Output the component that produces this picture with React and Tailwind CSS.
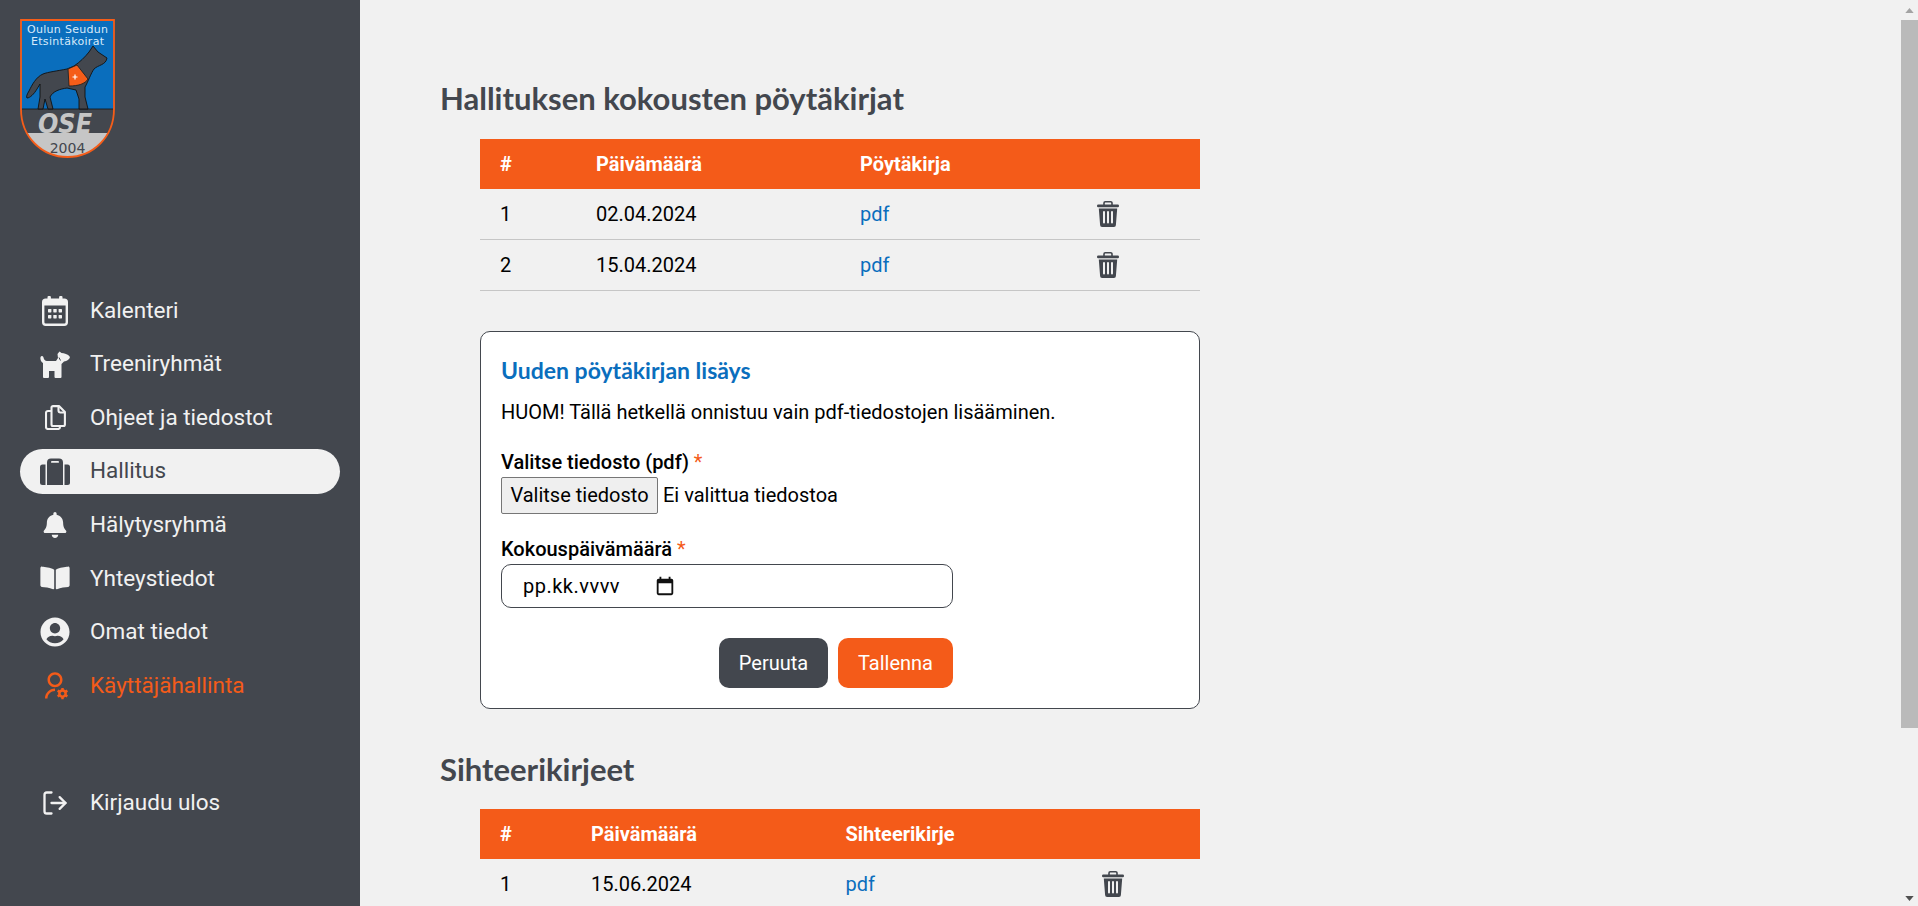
import { FaBell, FaBookOpen, FaUserCircle } from 'react-icons/fa'
import { RiUserSettingsLine } from 'react-icons/ri'
import { FiLogOut } from 'react-icons/fi'

function CalendarIcon() {
  return (
    <svg viewBox="0 0 26 30" className="w-[26px] h-[30px]" fill="currentColor">
      <rect x="5.5" y="0" width="3.4" height="6" rx="1" />
      <rect x="17.1" y="0" width="3.4" height="6" rx="1" />
      <rect x="1.2" y="3.6" width="23.6" height="25.2" rx="2.5" fill="none" stroke="currentColor" strokeWidth="2.4" />
      <rect x="1" y="4" width="24" height="5.5" />
      <rect x="6" y="13" width="3.4" height="3.4" rx="0.6" />
      <rect x="11.3" y="13" width="3.4" height="3.4" rx="0.6" />
      <rect x="16.6" y="13" width="3.4" height="3.4" rx="0.6" />
      <rect x="6" y="19" width="3.4" height="3.4" rx="0.6" />
      <rect x="11.3" y="19" width="3.4" height="3.4" rx="0.6" />
      <rect x="16.6" y="19" width="3.4" height="3.4" rx="0.6" />
    </svg>
  )
}

function DogIcon() {
  return (
    <svg viewBox="0 0 30 27" className="w-[30px] h-[27px]" fill="currentColor">
      <path d="M0.5 6C1.5 4.5 3 5 3.5 6.5C4 8.5 5 10 7 10H16L18 7L17.5 3L19.5 0.5L21.5 2C24 2 28 3 30 6C29.5 8.5 27 10 24 10.5L21.5 13V26a1 1 0 0 1-1 1H15.5a1 1 0 0 1-1-1V20H9V26a1 1 0 0 1-1 1H4a1 1 0 0 1-1-1V12C1 11 0 8 0.5 6Z" />
      <path d="M19 6.5L20.5 9.5" stroke="#43474e" strokeWidth="1" fill="none" />
    </svg>
  )
}

function FilesIcon() {
  return (
    <svg viewBox="0 0 21 25" className="w-[21px] h-[25px]" fill="none" stroke="currentColor" strokeWidth="2.1" strokeLinejoin="round">
      <path d="M8 1.1H14L19.9 7V19.5a1.5 1.5 0 0 1-1.5 1.5H8a1.5 1.5 0 0 1-1.5-1.5V2.6A1.5 1.5 0 0 1 8 1.1Z" />
      <path d="M13.5 1.5V5.5a2 2 0 0 0 2 2h4.4" />
      <path d="M6.5 6H3a2 2 0 0 0-2 2V22a2 2 0 0 0 2 2H13a2 2 0 0 0 2-2V21" />
    </svg>
  )
}

function SuitcaseIcon() {
  return (
    <svg viewBox="0 0 30 27" className="w-[30px] h-[27px]" fill="currentColor">
      <path d="M5.5 6.5H2.5A2.5 2.5 0 0 0 0 9V24.5A2.5 2.5 0 0 0 2.5 27H5.5Z" />
      <path d="M24.5 6.5H27.5A2.5 2.5 0 0 1 30 9V24.5A2.5 2.5 0 0 1 27.5 27H24.5Z" />
      <path d="M7 27V4.5A4 4 0 0 1 11 0.5H19A4 4 0 0 1 23 4.5V27Z" />
      <rect x="11" y="3" width="8" height="1.8" rx="0.9" fill="#f1f1f1" />
    </svg>
  )
}

function TrashIcon() {
  return (
    <svg viewBox="0 0 22 26" className="w-[22px] h-[26px] text-[#43474e]" fill="currentColor">
      <path d="M7 4.5V2A1.2 1.2 0 0 1 8.2 0.8H13.8A1.2 1.2 0 0 1 15 2V4.5" fill="none" stroke="currentColor" strokeWidth="1.6" />
      <rect x="0" y="3.6" width="22" height="2.6" rx="1.2" />
      <path d="M1.8 7.6H20.2L18.9 24A2 2 0 0 1 16.9 26H5.1A2 2 0 0 1 3.1 24Z" />
      <rect x="6" y="10" width="2" height="12.5" rx="1" fill="#f1f1f1" />
      <rect x="10" y="10" width="2" height="12.5" rx="1" fill="#f1f1f1" />
      <rect x="14" y="10" width="2" height="12.5" rx="1" fill="#f1f1f1" />
    </svg>
  )
}

const menu = [
  { label: 'Kalenteri', icon: <CalendarIcon /> },
  { label: 'Treeniryhmät', icon: <DogIcon /> },
  { label: 'Ohjeet ja tiedostot', icon: <FilesIcon /> },
  { label: 'Hallitus', icon: <SuitcaseIcon />, active: true },
  { label: 'Hälytysryhmä', icon: <FaBell className="w-[24px] h-[26px]" /> },
  { label: 'Yhteystiedot', icon: <FaBookOpen className="w-[30px] h-[26px]" /> },
  { label: 'Omat tiedot', icon: <FaUserCircle className="w-[30px] h-[30px]" /> },
  { label: 'Käyttäjähallinta', icon: <RiUserSettingsLine className="w-[30px] h-[30px]" />, admin: true },
]

function Logo() {
  return (
    <svg viewBox="0 0 95 140" className="w-[95px] h-[140px] block">
      <defs>
        <clipPath id="shield">
          <path d="M1 1H94V90C94 118 73 138 47.5 138C22 138 1 118 1 90Z" />
        </clipPath>
      </defs>
      <g clipPath="url(#shield)">
        <rect width="95" height="90" fill="#0a6ebd" />
        <rect y="90" width="95" height="24" fill="#43474e" />
        <rect y="114" width="95" height="26" fill="#c6c6c6" />
      </g>
      <line x1="2" y1="90" x2="93" y2="90" stroke="#111" strokeWidth="0.8" />
      <text x="47.5" y="13.5" textAnchor="middle" fontSize="11" fill="#d6eafa" fontFamily="DejaVu Sans" textLength="81">Oulun Seudun</text>
      <text x="47.5" y="26" textAnchor="middle" fontSize="11" fill="#d6eafa" fontFamily="DejaVu Sans" textLength="73">Etsintäkoirat</text>
      <path d="M87 39L78 33L73 27L69 33C65 38 60 43 54 47L47 50C37 52 28 53 23 55C16 58 12 66 9 72C7 75 6 78 7 79C10 79 14 75 17 70L20 65L20 78L18 90H23L25 80L28 90H33L30 78C33 72 40 70 47 69L56 71L59 80L59 90H68L65 78L65 68C68 63 71 54 74 50C78 46 86 46 87 39Z" fill="#43474e" stroke="#111" strokeWidth="0.9" strokeLinejoin="round" />
      <path d="M48 50L57 46L68 60C65 65 58 67 49 67Z" fill="#f55d19" stroke="#222" strokeWidth="0.9" />
      <path d="M52.5 58h5M55 55.5v5" stroke="#fff" strokeWidth="1.2" />
      <text x="45" y="114" textAnchor="middle" fontSize="26" fontWeight="700" fontStyle="italic" fill="#c6c6c6" fontFamily="DejaVu Sans" textLength="54" lengthAdjust="spacingAndGlyphs">OSE</text>
      <text x="47.5" y="134" textAnchor="middle" fontSize="14" fill="#43474e" fontFamily="DejaVu Sans">2004</text>
      <path d="M1 1H94V90C94 118 73 138 47.5 138C22 138 1 118 1 90Z" fill="none" stroke="#f55d19" strokeWidth="1.8" />
    </svg>
  )
}

function NavItem({ item }) {
  let color = 'text-[#f1f1f1]'
  if (item.active) color = 'bg-[#f1f1f1] text-[#43474e]'
  if (item.admin) color = 'text-[#f45b19]'
  return (
    <a className={`flex items-center h-[45px] rounded-full pl-[20px] text-[22.5px] ${color}`}>
      <span className="w-[30px] flex justify-center shrink-0">{item.icon}</span>
      <span className="ml-[20px]">{item.label}</span>
    </a>
  )
}

function Sidebar() {
  return (
    <aside className="w-[360px] shrink-0 h-full bg-[#43474e] pl-[20px] pr-[20px]">
      <div className="pt-[19px] h-[288px]">
        <Logo />
      </div>
      <nav className="flex flex-col gap-[8.6px]">
        {menu.map((item) => (
          <NavItem key={item.label} item={item} />
        ))}
      </nav>
      <div className="mt-[72px]">
        <NavItem item={{ label: 'Kirjaudu ulos', icon: <FiLogOut className="w-[28px] h-[28px]" /> }} />
      </div>
    </aside>
  )
}

function DocTable({ title, rows, widths }) {
  return (
    <table className="w-[720px] ml-[40px] table-fixed border-collapse text-[20px]">
      <colgroup>
        <col className={widths[0]} />
        <col className={widths[1]} />
        <col className={widths[2]} />
        <col />
      </colgroup>
      <thead>
        <tr className="h-[50px] bg-[#f45b19] text-white text-left">
          <th className="pl-[20px] font-bold">#</th>
          <th className="font-bold">Päivämäärä</th>
          <th className="font-bold">{title}</th>
          <th />
        </tr>
      </thead>
      <tbody>
        {rows.map((row, index) => (
          <tr key={row} className="h-[50.5px] border-b border-[#c6c6c6] text-black">
            <td className="pl-[20px]">{index + 1}</td>
            <td>{row}</td>
            <td><a className="text-[#0a6ebd]">pdf</a></td>
            <td><TrashIcon /></td>
          </tr>
        ))}
      </tbody>
    </table>
  )
}

function AddForm() {
  return (
    <div className="w-[720px] h-[378px] ml-[40px] mt-[40px] bg-white border border-[#43474e] rounded-[10px] pl-[20px] pt-[19px] text-black text-[20px]">
      <h3 className="text-[#0a6ebd] text-[23px] font-bold font-['Lato'] leading-[38px]">Uuden pöytäkirjan lisäys</h3>
      <p className="mt-[8px] leading-[30px]">HUOM! Tällä hetkellä onnistuu vain pdf-tiedostojen lisääminen.</p>
      <label className="block mt-[20px] font-medium leading-[30px]">Valitse tiedosto (pdf) <span className="text-[#f45b19] font-normal">*</span></label>
      <div className="flex items-center">
        <button className="w-[157px] h-[37px] bg-[#efefef] border border-[#767676] rounded-[2px]">Valitse tiedosto</button>
        <span className="ml-[5px]">Ei valittua tiedostoa</span>
      </div>
      <label className="block mt-[20px] font-medium leading-[30px]">Kokouspäivämäärä <span className="text-[#f45b19] font-normal">*</span></label>
      <div className="w-[452px] h-[44px] border border-[#43474e] rounded-[10px] flex items-center pl-[21px]">
        <span className="tracking-[0.5px]">pp.kk.vvvv</span>
        <svg viewBox="0 0 24 24" className="w-[22px] h-[22px] ml-[34px]">
          <path d="M19 4h-1V2h-2v2H8V2H6v2H5a2 2 0 0 0-2 2v14a2 2 0 0 0 2 2h14a2 2 0 0 0 2-2V6a2 2 0 0 0-2-2zm0 16H5V9h14v11z" fill="#111" />
        </svg>
      </div>
      <div className="w-[452px] flex justify-end gap-[10px] mt-[30px]">
        <button className="w-[109px] h-[50px] rounded-[10px] bg-[#43474e] text-white">Peruuta</button>
        <button className="w-[115px] h-[50px] rounded-[10px] bg-[#f45b19] text-white">Tallenna</button>
      </div>
    </div>
  )
}

function Scrollbar() {
  return (
    <div className="w-[17px] shrink-0 h-full flex flex-col bg-[#f1f1f1]">
      <div className="h-[20px] flex items-center justify-center">
        <svg viewBox="0 0 10 6" className="w-[9px] h-[5px]"><path d="M5 0L10 6H0Z" fill="#a3a3a3" /></svg>
      </div>
      <div className="h-[708px] bg-[#bababa]" />
      <div className="flex-1 flex items-end justify-center pb-[5px]">
        <svg viewBox="0 0 10 6" className="w-[9px] h-[5px]"><path d="M0 0H10L5 6Z" fill="#505050" /></svg>
      </div>
    </div>
  )
}

export default function App() {
  return (
    <div className="flex h-screen overflow-hidden bg-[#f1f1f1] font-['Roboto',sans-serif]">
      <Sidebar />
      <main className="flex-1 overflow-hidden pl-[80px] pt-[78px]">
        <h2 className="text-[#43474e] text-[31px] font-bold font-['Lato'] leading-[40px] mb-[21px]">Hallituksen kokousten pöytäkirjat</h2>
        <DocTable title="Pöytäkirja" rows={['02.04.2024', '15.04.2024']} widths={['w-[116px]', 'w-[264px]', 'w-[237px]']} />
        <AddForm />
        <h2 className="text-[#43474e] text-[31px] font-bold font-['Lato'] leading-[40px] mt-[40px] mb-[20px]">Sihteerikirjeet</h2>
        <DocTable title="Sihteerikirje" rows={['15.06.2024']} widths={['w-[111px]', 'w-[254.5px]', 'w-[256px]']} />
      </main>
      <Scrollbar />
    </div>
  )
}
